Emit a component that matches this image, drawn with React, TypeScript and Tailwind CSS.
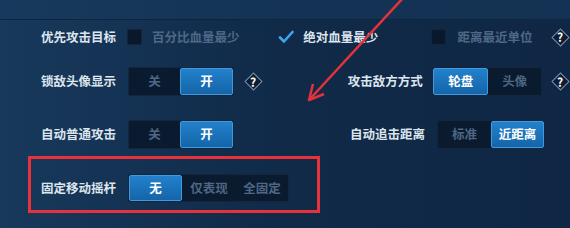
import type { ReactNode } from 'react';

const font = { fontFamily: '"Noto Sans CJK SC", "Noto Sans", sans-serif' };

function Label({ children, className = '' }: { children: ReactNode; className?: string }) {
  return (
    <span className={`text-[12.5px] font-bold leading-none text-[#dde5ee] ${className}`}>
      {children}
    </span>
  );
}

function Cell({ text, active, w }: { text: string; active?: boolean; w: string }) {
  return active ? (
    <div
      className={`${w} h-full flex items-center justify-center rounded-[2px] border border-[#3f9ae2] bg-gradient-to-b from-[#2381cc] to-[#1465a8] text-[12.5px] font-bold text-white`}
    >
      {text}
    </div>
  ) : (
    <div className={`${w} h-full flex items-center justify-center text-[12.5px] font-bold text-[#4e6784]`}>
      {text}
    </div>
  );
}

function Segmented({ children }: { children: ReactNode }) {
  return (
    <div className="flex h-full items-stretch rounded-[2px] border border-[#14263d] bg-[#0a1a2f]">
      {children}
    </div>
  );
}

function Help({ className = '' }: { className?: string }) {
  return (
    <div className={`relative flex h-[20px] w-[20px] items-center justify-center ${className}`}>
      <div className="absolute h-[13px] w-[13px] rotate-45 border border-[#7d93ab] bg-[#0c1d33]" />
      <span className="relative text-[12px] font-bold leading-none text-white">?</span>
    </div>
  );
}

function Box() {
  return <div className="h-[16px] w-[15px] rounded-[1px] border border-[#13243c] bg-[#0a182b]" />;
}

export default function App() {
  return (
    <div
      className="relative h-[228px] w-[570px] overflow-hidden bg-gradient-to-r from-[#18395c] via-[#102a48] to-[#0f2744]"
      style={font}
    >
      <div className="h-[20px] border-b border-[#0e2440] bg-[#183a5e]/60" />

      {/* row 1 */}
      <div className="mt-[1px] flex h-[32px] items-center pl-[41px]">
        <Label className="w-[87px]">优先攻击目标</Label>
        <div className="flex w-[152px] items-center">
          <Box />
          <span className="ml-[10px] text-[12.5px] font-bold text-[#4f6886]">百分比血量最少</span>
        </div>
        <div className="flex w-[155px] items-center">
          <svg width="16" height="14" viewBox="0 0 16 14" className="ml-[1px]">
            <path d="M2 7.5 L6 11.5 L14.5 2" fill="none" stroke="#3ea6f0" strokeWidth="2.6" strokeLinecap="round" strokeLinejoin="round" />
          </svg>
          <Label className="ml-[9px]">绝对血量最少</Label>
        </div>
        <div className="flex w-[121px] items-center">
          <Box />
          <span className="ml-[12px] text-[12.5px] font-bold text-[#4f6886]">距离最近单位</span>
        </div>
        <Help />
      </div>

      {/* row 2 */}
      <div className="mt-[14px] flex h-[29px] items-center pl-[41px]">
        <div className="flex h-full w-[309px] items-center">
          <Label className="w-[87px]">锁敌头像显示</Label>
          <Segmented>
            <Cell text="关" w="w-[51px]" />
            <Cell text="开" active w="w-[53px]" />
          </Segmented>
          <Help className="ml-[9px]" />
        </div>
        <Label className="w-[85px]">攻击敌方方式</Label>
        <Segmented>
          <Cell text="轮盘" active w="w-[55px]" />
          <Cell text="头像" w="w-[53px]" />
        </Segmented>
        <Help className="ml-[8px]" />
      </div>

      {/* row 3 */}
      <div className="mt-[24px] flex h-[29px] items-center pl-[41px]">
        <div className="flex h-full w-[309px] items-center">
          <Label className="w-[87px]">自动普通攻击</Label>
          <Segmented>
            <Cell text="关" w="w-[51px]" />
            <Cell text="开" active w="w-[53px]" />
          </Segmented>
        </div>
        <Label className="w-[87px]">自动追击距离</Label>
        <Segmented>
          <Cell text="标准" w="w-[53px]" />
          <Cell text="近距离" active w="w-[53px]" />
        </Segmented>
      </div>

      {/* row 4, highlighted */}
      <div className="ml-[28px] mt-[7px] h-[57px] w-[292px] border-[3px] border-[#e8313a] pl-[10px] pt-[15px]">
        <div className="flex h-[28px] items-center">
          <Label className="w-[87px]">固定移动摇杆</Label>
          <Segmented>
            <Cell text="无" active w="w-[53px]" />
            <Cell text="仅表现" w="w-[54px]" />
            <Cell text="全固定" w="w-[52px]" />
          </Segmented>
        </div>
      </div>

      {/* annotation arrow */}
      <svg className="pointer-events-none absolute left-0 top-0" width="570" height="228">
        <path d="M403 -2 L310 99" stroke="#e5323a" strokeWidth="2.5" fill="none" />
        <path d="M313 84 L309 100 L324 94" stroke="#e5323a" strokeWidth="2.5" fill="none" strokeLinejoin="round" />
      </svg>
    </div>
  );
}
